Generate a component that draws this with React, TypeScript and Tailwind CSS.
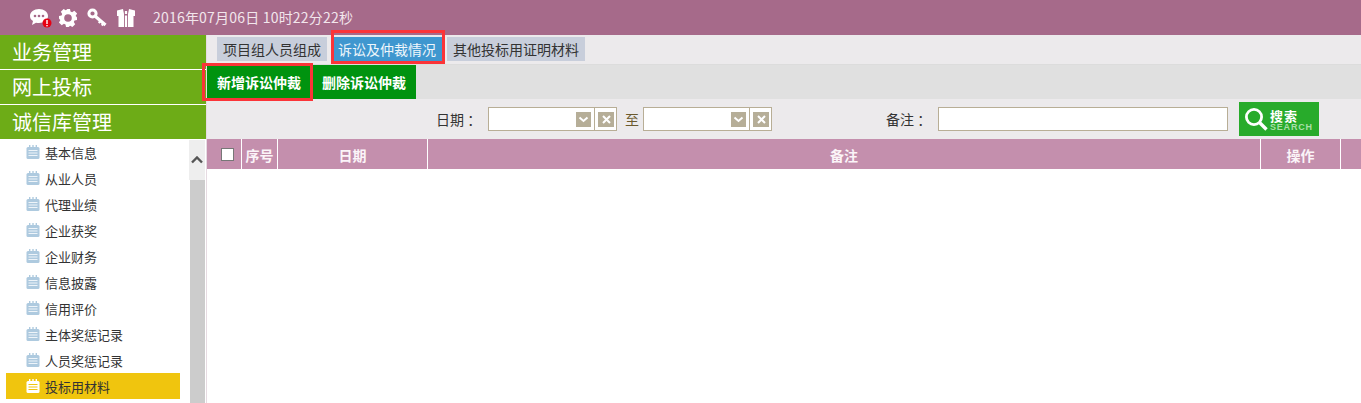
import React from "react";

const font = { fontFamily: '"Noto Sans CJK SC", "Liberation Sans", sans-serif' };

const navGroups = ["业务管理", "网上投标", "诚信库管理"];
const menuItems = ["基本信息", "从业人员", "代理业绩", "企业获奖", "企业财务", "信息披露", "信用评价", "主体奖惩记录", "人员奖惩记录", "投标用材料"];

const ChatIcon = () => (
  <svg width="24" height="22" viewBox="0 0 24 22">
    <path d="M10 2c5 0 9 3 9 7s-4 7-9 7c-1 0-2 0-3-.3L3 18l1-4C2 13 1 11 1 9c0-4 4-7 9-7z" fill="#fff" />
    <circle cx="6" cy="9" r="1.3" fill="#a66a8a" />
    <circle cx="10" cy="9" r="1.3" fill="#a66a8a" />
    <circle cx="14" cy="9" r="1.3" fill="#a66a8a" />
    <circle cx="18" cy="16" r="4.5" fill="#e60012" />
    <rect x="17.3" y="13" width="1.4" height="4" fill="#fff" />
    <rect x="17.3" y="18" width="1.4" height="1.3" fill="#fff" />
  </svg>
);

const GearIcon = () => (
  <svg width="20" height="20" viewBox="0 0 20 20">
    <path
      d="M8 1h4l.5 2.5 1.6.7 2.2-1.4 2.8 2.8-1.4 2.2.7 1.6L19 8v4l-2.5.5-.7 1.6 1.4 2.2-2.8 2.8-2.2-1.4-1.6.7L12 19H8l-.5-2.5-1.6-.7-2.2 1.4-2.8-2.8 1.4-2.2-.7-1.6L1 12V8l2.5-.5.7-1.6-1.4-2.2 2.8-2.8 2.2 1.4 1.6-.7z"
      fill="#fff"
    />
    <circle cx="10" cy="10" r="3.8" fill="#a66a8a" />
  </svg>
);

const KeyIcon = () => (
  <svg width="20" height="20" viewBox="0 0 20 20">
    <circle cx="5.5" cy="5.5" r="3.6" fill="none" stroke="#fff" strokeWidth="3" />
    <path d="M8.5 8.5l10 8.5" stroke="#fff" strokeWidth="3.2" fill="none" />
    <path d="M13.5 13l-1.8 2M16.5 15.5l-1.8 2" stroke="#fff" strokeWidth="2" fill="none" />
  </svg>
);

const GiftIcon = () => (
  <svg width="20" height="20" viewBox="0 0 20 20">
    <path d="M7 1L1 2.5V8h1.5v11H8V6zM13 1l6 1.5V8h-1.5v11H12V6z" fill="#fff" />
    <rect x="8.9" y="7.5" width="2.2" height="11.5" fill="#fff" />
    <rect x="8.9" y="3" width="2.2" height="3" fill="#fff" />
  </svg>
);

const NoteIcon = ({ active }: { active?: boolean }) => (
  <svg width="14" height="14" viewBox="0 0 14 14" className="shrink-0 -mt-[3px]">
    <rect x="0.5" y="2" width="13" height="12" rx="1.5" fill={active ? "#fff" : "#aecadf"} />
    <rect x="3" y="0" width="1.4" height="3" fill={active ? "#fff" : "#aecadf"} />
    <rect x="6.3" y="0" width="1.4" height="3" fill={active ? "#fff" : "#aecadf"} />
    <rect x="9.6" y="0" width="1.4" height="3" fill={active ? "#fff" : "#aecadf"} />
    <path d="M2.5 5.5h9M2.5 8h9M2.5 10.5h9" stroke={active ? "#f0c50e" : "#eef4f9"} strokeWidth="1.2" />
  </svg>
);

const DateBox = () => (
  <div className="w-[129px] h-6 border border-[#b8ae96] bg-white flex items-center justify-end pr-[2px]">
    <div className="w-[15px] h-[15px] bg-[#b6ae98] flex items-center justify-center">
      <svg width="11" height="7" viewBox="0 0 11 7">
        <path d="M1.5 1.5L5.5 5l4-3.5" stroke="#fff" strokeWidth="2" fill="none" />
      </svg>
    </div>
    <div className="w-px h-[22px] bg-[#b8ae96] ml-[3px] mr-[3px]" />
    <div className="w-[16px] h-[15px] bg-[#b6ae98] flex items-center justify-center">
      <svg width="9" height="9" viewBox="0 0 9 9">
        <path d="M1 1l7 7M8 1L1 8" stroke="#fff" strokeWidth="2" />
      </svg>
    </div>
  </div>
);

const App = () => {
  return (
    <div className="w-[1361px] h-[403px] overflow-hidden flex flex-col bg-white" style={font}>
      <header className="h-[35px] shrink-0 bg-[#a66a8a] flex items-center pl-[29px]">
        <div className="flex items-center">
          <ChatIcon />
          <div className="ml-[5px]">
            <GearIcon />
          </div>
          <div className="ml-[9px]">
            <KeyIcon />
          </div>
          <div className="ml-[9px]">
            <GiftIcon />
          </div>
        </div>
        <span className="ml-[17px] text-[14px] tracking-[0.2px] text-[#f2e6ec]">2016年07月06日 10时22分22秒</span>
      </header>

      <div className="flex flex-1 min-h-0">
        <aside className="w-[206px] shrink-0 flex flex-col border-r border-[#e6dbe2] box-content">
          {navGroups.map((g, i) => (
            <div
              key={g}
              className={`h-[34px] bg-[#6dac17] text-white text-[20px] leading-[34px] pl-3 ${i < 2 ? "border-b border-white box-content" : ""}`}
            >
              {g}
            </div>
          ))}
          <div className="flex flex-1 min-h-0">
            <ul className="w-[189px] pl-[6px] pr-[9px]">
              {menuItems.map((m, i) => (
                <li
                  key={m}
                  className={`h-[26px] flex items-center gap-[5px] pl-5 pt-[2px] text-[13px] text-[#333] ${i === 9 ? "bg-[#f0c50e]" : ""}`}
                >
                  <NoteIcon active={i === 9} />
                  {m}
                </li>
              ))}
            </ul>
            <div className="w-4 mt-px flex flex-col">
              <div className="h-10 bg-[#eeeeee] flex items-center justify-center">
                <svg width="12" height="8" viewBox="0 0 12 8">
                  <path d="M1 6.5l5-5 5 5" stroke="#555" strokeWidth="2.4" fill="none" />
                </svg>
              </div>
              <div className="flex-1 bg-[#cccccc] ml-px" />
            </div>
          </div>
        </aside>

        <main className="flex-1 flex flex-col min-w-0 relative">
          <div className="h-[30px] bg-[#eceaec] border-b border-[#dcdcdc] flex items-start pt-[2px] pl-[10px]">
            <div className="h-6 w-[110px] bg-[#c8cedb] text-[14px] leading-[25px] text-center text-[#333]">项目组人员组成</div>
            <div className="h-6 w-[110px] ml-[7px] pl-1 bg-[#3f97cf] text-[14px] leading-[25px] text-[#eef6fb]">诉讼及仲裁情况</div>
            <div className="h-6 w-[138px] ml-[3px] bg-[#c8cedb] text-[14px] leading-[25px] text-center text-[#333]">其他投标用证明材料</div>
          </div>

          <div className="h-[34px] bg-[#e0e0e0] flex gap-[2px]">
            <button className="w-[103px] bg-[#00930f] text-white text-[14px] font-bold pl-[1px]">新增诉讼仲裁</button>
            <button className="w-[104px] bg-[#00930f] text-white text-[14px] font-bold">删除诉讼仲裁</button>
          </div>

          <div className="h-[40px] bg-[#eceaec] flex items-center text-[14px] text-[#333]">
            <span className="ml-[229px] w-[52px] whitespace-nowrap">日期 ：</span>
            <DateBox />
            <span className="ml-[8px] w-[18px] text-[#6b5a2e]">至</span>
            <DateBox />
            <span className="ml-[114px] w-[52px] whitespace-nowrap">备注 ：</span>
            <div className="w-[290px] h-6 border border-[#b8ae96] bg-white" />
            <div className="ml-[11px] w-[80px] h-[34px] bg-[#28ab2b] flex items-center pl-[5px]">
              <svg width="25" height="25" viewBox="0 0 25 25" className="shrink-0">
                <circle cx="10" cy="10" r="7.6" stroke="#fff" strokeWidth="2.8" fill="none" />
                <path d="M15.5 15.5l7 7" stroke="#fff" strokeWidth="3.4" />
              </svg>
              <div className="ml-[1px] flex flex-col leading-none text-white">
                <span className="text-[13px] font-bold tracking-[1px] leading-[15px]">搜索</span>
                <span className="text-[9px] font-bold tracking-[0.8px] text-[#a8dfa8] leading-[8px]" style={{ fontFamily: '"Liberation Sans", sans-serif' }}>SEARCH</span>
              </div>
            </div>
          </div>

          <div className="h-[30px] bg-[#c48fad] flex text-[14px] font-bold text-[#fbf4f8] divide-x divide-white leading-[32px]">
            <div className="w-[35px] flex items-center justify-center pl-[6px]">
              <div className="w-[13px] h-[13px] bg-white border border-[#777]" />
            </div>
            <div className="w-[36px] text-center">序号</div>
            <div className="w-[150px] text-center">日期</div>
            <div className="w-[833px] text-center">备注</div>
            <div className="w-[80px] text-center">操作</div>
            <div className="flex-1" />
          </div>

          <div className="flex-1 bg-white" />

          {/* 红色标注框 */}
          <div className="absolute left-[-5px] top-[28px] w-[111px] h-[38px] border-[3px] border-[#fb3438]" />
          <div className="absolute left-[124px] top-[-5px] w-[114px] h-[34px] border-[3px] border-[#fb3438]" />
        </main>
      </div>
    </div>
  );
};

export default App;
